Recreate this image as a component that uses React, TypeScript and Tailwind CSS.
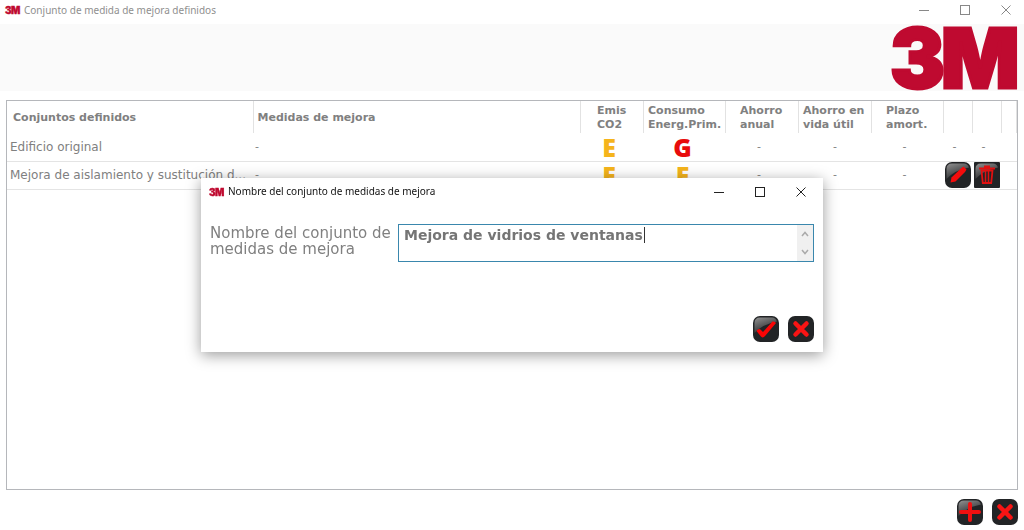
import React, { useState } from "react";

type Glyph = "check" | "close" | "plus" | "pencil" | "trash";

function Logo({ className }: { className: string }) {
  return (
    <svg viewBox="0 0 126 66" className={"overflow-visible " + className} role="img" aria-label="3M">
      <g
        fill="#bf0a30"
        stroke="#bf0a30"
        strokeWidth="3"
        fontFamily="Inter, 'Liberation Sans', sans-serif"
        fontWeight="900"
        fontSize="82"
      >
        <text x="-1" y="63">3</text>
        <text x="50" y="63">M</text>
      </g>
    </svg>
  );
}

function GlyphShape({ glyph }: { glyph: Glyph }) {
  switch (glyph) {
    case "check":
      return <path d="M3.500 15Q5.500 12 7.500 13.500L10 16 19.500 5.500Q22 5 23 7L12.500 19.500Q9.500 23 7.500 20z" fill="#fa0505" />;
    case "close":
      return <path d="M7.500 7.500l11 11M18.500 7.500l-11 11" stroke="#f81414" strokeWidth="4.500" strokeLinecap="round" />;
    case "plus":
      return <path d="M13 5v16M4 13h18" stroke="#f01010" strokeWidth="4" strokeLinecap="round" />;
    case "pencil":
      return <path d="M5.500 20.500 6.500 15.500 16.500 6l2-1.500 3 3-1.500 2.500L10.500 19.500z" fill="#f50c0c" />;
    case "trash":
      return (
        <g fill="none" stroke="#e01010">
          <path d="M5 6.500h16M10 4.500h6" strokeWidth="2" />
          <path d="M7.500 8.500l1.300 12.500h8.400l1.300-12.500z" strokeWidth="1.800" />
          <path d="M11.500 9v11.500M14.500 9v11.500" strokeWidth="1.500" />
        </g>
      );
  }
}

function IconButton({
  glyph,
  label,
  square,
  flat,
}: {
  glyph: Glyph;
  label: string;
  square?: boolean;
  flat?: boolean;
}) {
  const id = "gloss-" + glyph;
  return (
    <button type="button" aria-label={label} className="block size-[26px] shrink-0">
      <svg viewBox="0 0 26 26" className="block size-full" aria-hidden="true">
        <defs>
          <linearGradient id={id} x1="0" y1="0" x2="0.5" y2="1">
            <stop offset="0" stopColor="#929292" />
            <stop offset="0.9" stopColor="#303234" />
          </linearGradient>
        </defs>
        <rect width="26" height="26" rx={square ? 1 : 7} fill="#222426" />
        {!flat && <path d="M1.500 7Q1.500 1.500 7 1.500h12q3.500 0 5 4Q10 8 1.500 17z" fill={`url(#${id})`} />}
        <GlyphShape glyph={glyph} />
      </svg>
    </button>
  );
}

function WindowControls({ tone }: { tone: string }) {
  const icon = "block size-[10px]";
  return (
    <div className={"flex items-center gap-[31px] " + tone}>
      <button type="button" aria-label="Minimizar">
        <svg viewBox="0 0 10 10" className={icon} stroke="currentColor" fill="none"><path d="M0 5.500h10" /></svg>
      </button>
      <button type="button" aria-label="Maximizar">
        <svg viewBox="0 0 10 10" className={icon} stroke="currentColor" fill="none"><rect x="0.500" y="0.500" width="9" height="9" /></svg>
      </button>
      <button type="button" aria-label="Cerrar">
        <svg viewBox="0 0 10 10" className={icon} stroke="currentColor" fill="none"><path d="M0.500 0.500l9 9M9.500 0.500l-9 9" /></svg>
      </button>
    </div>
  );
}

const columns = [
  { width: "w-[246px]", head: ["Conjuntos definidos"], pad: "pl-[6px]" },
  { width: "", head: ["Medidas de mejora"], pad: "pl-1" },
  { width: "w-[63px]", head: ["Emis", "CO2"], pad: "pl-4" },
  { width: "w-[82px]", head: ["Consumo", "Energ.Prim."], pad: "pl-1" },
  { width: "w-[73px]", head: ["Ahorro", "anual"], pad: "pl-[14px]" },
  { width: "w-[73px]", head: ["Ahorro en", "vida útil"], pad: "pl-1" },
  { width: "w-[72px]", head: ["Plazo", "amort."], pad: "pl-[14px]" },
  { width: "w-[29px]", head: [], pad: "" },
  { width: "w-[29px]", head: [], pad: "" },
  { width: "w-[15px]", head: [], pad: "" },
];

const rows = [
  { name: "Edificio original", emissions: "E", energy: "G", editable: false },
  { name: "Mejora de aislamiento y sustitución d...", emissions: "E", energy: "E", editable: true },
];

const ratingColors: Record<string, string> = { E: "text-[#f5b41c]", G: "text-[#e80c0c]" };

function Rating({ letter }: { letter: string }) {
  return (
    <span className={"block font-['Open_Sans',sans-serif] text-[25px] leading-[26px] font-extrabold " + ratingColors[letter]}>
      {letter}
    </span>
  );
}

function MeasuresTable() {
  return (
    <table className="w-full table-fixed border-collapse text-[11px] text-[#808080]">
      <colgroup>
        {columns.map((c, i) => <col key={i} className={c.width} />)}
      </colgroup>
      <thead>
        <tr className="h-8">
          {columns.map((c, i) => (
            <th key={i} scope="col" className={"border-r border-[#e2e2e2] p-0 pt-[2px] text-left leading-[14px] font-bold whitespace-nowrap " + c.pad}>
              {c.head.map((line) => <span key={line} className="block">{line}</span>)}
            </th>
          ))}
        </tr>
      </thead>
      <tbody>
        {rows.map((r) => (
          <tr key={r.name} className="h-7 border-b border-[#e4e4e4] text-center">
            <td className="p-0 pl-[3px] text-left text-xs whitespace-nowrap">{r.name}</td>
            <td className="p-0 pl-[2px] text-left">-</td>
            <td className="p-0 pr-[6px]"><Rating letter={r.emissions} /></td>
            <td className="p-0 pr-1"><Rating letter={r.energy} /></td>
            <td className="p-0 pr-[6px]">-</td>
            <td className="p-0">-</td>
            <td className="p-0 pr-[6px]">-</td>
            <td className="p-0 pl-px">
              {r.editable ? <IconButton glyph="pencil" label="Editar" /> : <span className="pr-2">-</span>}
            </td>
            <td className="p-0 pl-px">
              {r.editable ? <IconButton glyph="trash" label="Eliminar" square /> : <span className="pr-2">-</span>}
            </td>
            <td className="p-0" />
          </tr>
        ))}
      </tbody>
    </table>
  );
}

function NameDialog() {
  const [name, setName] = useState("Mejora de vidrios de ventanas");
  return (
    <section
      role="dialog"
      aria-labelledby="dialog-title"
      className="flex h-[174px] w-[622px] flex-col bg-white shadow-[0_3px_14px_rgba(0,0,0,0.4)]"
    >
      <header className="flex h-[27px] items-center justify-between pr-[17px] pl-2">
        <div className="flex items-center gap-1">
          <Logo className="h-2 w-[15px]" />
          <h2 id="dialog-title" className="font-['Noto_Sans',sans-serif] text-[10px] text-[#111]">
            Nombre del conjunto de medidas de mejora
          </h2>
        </div>
        <WindowControls tone="text-[#222]" />
      </header>
      <div className="flex pt-[19px] pr-[9px] pl-[9px]">
        <label htmlFor="set-name" className="w-[188px] shrink-0 pt-px text-[15px] leading-4 text-[#808080]">
          Nombre del conjunto de medidas de mejora
        </label>
        <div className="relative flex h-[38px] flex-1 border border-[#3a87ad]">
          <textarea
            id="set-name"
            value={name}
            onChange={(e) => setName(e.target.value)}
            className="h-full flex-1 resize-none overflow-hidden bg-transparent px-[5px] pt-[2px] text-sm leading-4 font-bold text-[#757575] outline-none"
          />
          <span className="absolute top-[2px] left-[245px] h-4 w-px bg-[#333]" />
          <div className="flex w-4 flex-col items-center justify-between bg-[#f0f0f0] py-[6px] text-[#aaa]" aria-hidden="true">
            <svg viewBox="0 0 8 6" className="h-[6px] w-2" fill="none" stroke="currentColor" strokeWidth="1.500"><path d="M1 5l3-3.500L7 5" /></svg>
            <svg viewBox="0 0 8 6" className="h-[6px] w-2" fill="none" stroke="currentColor" strokeWidth="1.500"><path d="M1 1l3 3.500L7 1" /></svg>
          </div>
        </div>
      </div>
      <div className="mt-auto flex justify-end gap-[9px] pr-[9px] pb-[10px]">
        <IconButton glyph="check" label="Aceptar" />
        <IconButton glyph="close" label="Cancelar" flat />
      </div>
    </section>
  );
}

export default function App() {
  return (
    <div className="flex min-h-screen flex-col bg-white font-['DejaVu_Sans',sans-serif]">
      <header className="flex h-6 items-center justify-between pr-[13px] pb-1 pl-[5px]">
        <div className="flex items-center gap-1">
          <Logo className="h-2 w-[15px]" />
          <h1 className="font-['Noto_Sans',sans-serif] text-[10px] text-[#8f8f8f]">
            Conjunto de medida de mejora definidos
          </h1>
        </div>
        <WindowControls tone="text-[#888]" />
      </header>
      <div className="flex h-[67px] items-center justify-end bg-[#fafafa] pr-[7px]">
        <Logo className="h-[66px] w-[126px]" />
      </div>
      <main className="mx-[6px] mt-[9px] flex-1 border border-[#b5b7bb]">
        <MeasuresTable />
      </main>
      <footer className="flex h-10 items-center justify-end gap-[9px] pt-1 pr-[6px]">
        <IconButton glyph="plus" label="Añadir" />
        <IconButton glyph="close" label="Cerrar" flat />
      </footer>
      <div className="fixed inset-0 flex items-center justify-center">
        <NameDialog />
      </div>
    </div>
  );
}
